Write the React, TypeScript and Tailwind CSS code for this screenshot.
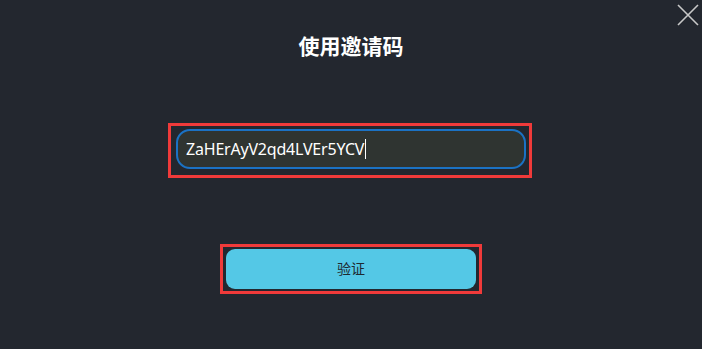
import React from "react";

export default function App() {
  return (
    <div className="w-[702px] h-[349px] bg-[#23272f] relative flex flex-col items-center" style={{ fontFamily: '"Noto Sans", "Noto Sans CJK SC", sans-serif' }}>
      <svg className="absolute left-[677px] top-[4px]" width="22" height="22" viewBox="0 0 22 22">
        <path d="M1 1 L21 21 M21 1 L1 21" stroke="#c8c8c8" strokeWidth="1.6" fill="none" />
      </svg>
      <div className="mt-[29px] h-[34px] flex items-center text-[21px] font-bold text-white leading-none">使用邀请码</div>
      <div className="mt-[60px] ml-[-2px] border-[3px] border-[#f03a3a] pl-[5px] pr-[3px] pt-[3px] pb-[6px]">
        <div className="w-[350px] h-[40px] rounded-[14px] border-2 border-[#1b72c4] bg-[#2f3431] flex items-center pl-[8px]">
          <span className="text-[16px] text-white leading-none tracking-[-0.2px]">ZaHErAyV2qd4LVEr5YCV</span>
          <span className="w-px h-[20px] bg-white ml-[1px]" />
        </div>
      </div>
      <div className="mt-[66px] border-[3px] border-[#f03a3a] px-[3px] py-[2px]">
        <div className="w-[250px] h-[40px] rounded-[9px] bg-[#54c8e6] flex items-center justify-center text-[14px] text-[#1e2a30] leading-none">验证</div>
      </div>
    </div>
  );
}
